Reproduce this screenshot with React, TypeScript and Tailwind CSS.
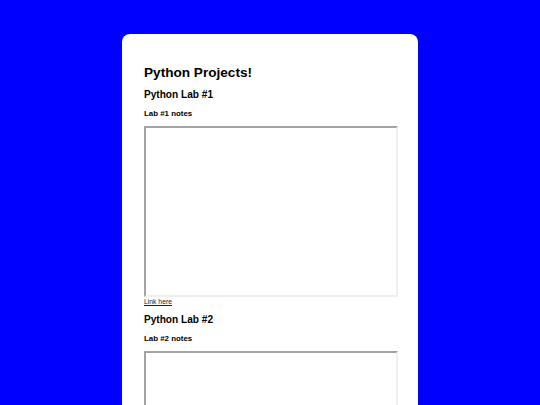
export default function App() {
  const labs = [1, 2];

  return (
    <div className="min-h-[405px] h-[405px] overflow-hidden bg-[#0000ff] pt-[34px] font-['Liberation_Sans',Arial,sans-serif] text-black">
      <div className="mx-auto w-[296px] rounded-[8px] bg-white pl-[22px] pr-[20px] pt-[31px] pb-[40px]">
        <h1 className="text-[13.6px] leading-[16px] font-bold">Python Projects!</h1>
        {labs.map((n) => (
          <section key={n}>
            <h2 className={`${n === 1 ? 'mt-[8px]' : 'mt-[7px]'} text-[10.1px] leading-[12px] font-bold`}>
              Python Lab #{n}
            </h2>
            <h3 className="mt-[8px] text-[7.9px] leading-[9px] font-bold">Lab #{n} notes</h3>
            <div className="mt-[8px] h-[171px] w-[254px] border-2 border-t-[#a3a3a3] border-l-[#a3a3a3] border-r-[#efefef] border-b-[#efefef] bg-white" />
            <a href="#" className="block text-[6.8px] leading-[10px] underline text-[#222]">
              Link here
            </a>
          </section>
        ))}
      </div>
    </div>
  );
}
